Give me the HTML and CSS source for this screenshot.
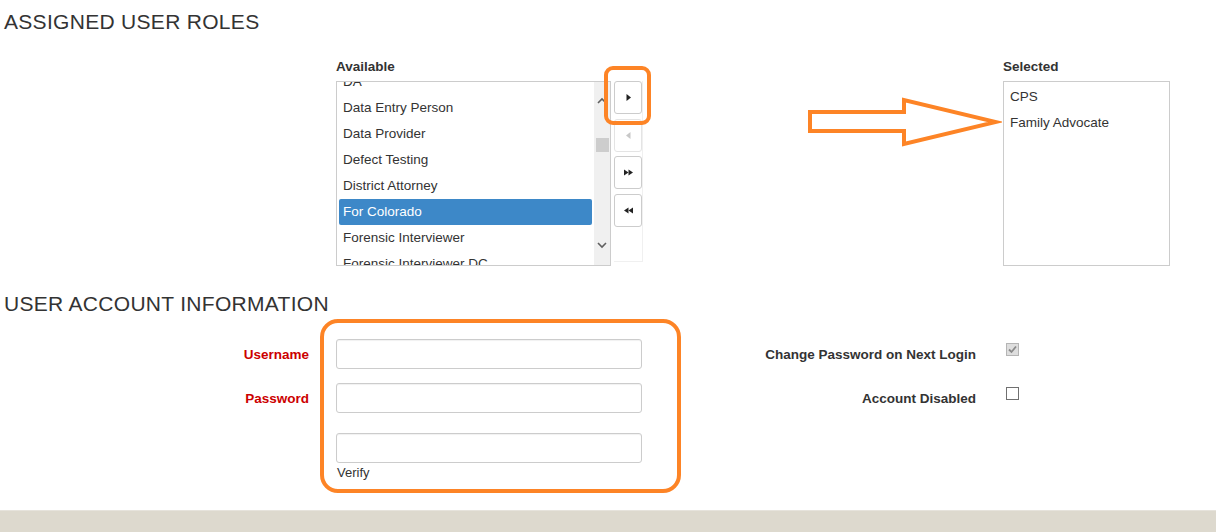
FILE: index.html
```html
<!DOCTYPE html>
<html>
<head>
<meta charset="utf-8">
<link rel="stylesheet" href="styles.css">
</head>
<body>
<div class="page">
  <h2 class="section-title">ASSIGNED USER ROLES</h2>
  <div class="roles">
    <div class="col-available">
      <div class="label">Available</div>
      <div class="listbox">
        <div class="list-items">
          <div class="list-inner">
            <div class="item">DA</div>
            <div class="item">Data Entry Person</div>
            <div class="item">Data Provider</div>
            <div class="item">Defect Testing</div>
            <div class="item">District Attorney</div>
            <div class="item item-active">For Colorado</div>
            <div class="item">Forensic Interviewer</div>
            <div class="item">Forensic Interviewer DC</div>
          </div>
        </div>
        <div class="scrollbar">
          <svg class="sb-up" width="10" height="7" viewBox="0 0 10 7"><polyline points="1,6 5,2 9,6" fill="none" stroke="#606060" stroke-width="1.6"/></svg>
          <div class="sb-thumb"></div>
          <svg class="sb-down" width="10" height="7" viewBox="0 0 10 7"><polyline points="1,1 5,5 9,1" fill="none" stroke="#606060" stroke-width="1.6"/></svg>
        </div>
      </div>
    </div>
    <div class="col-buttons">
      <div class="btn-group">
        <div class="btn"><svg width="7" height="9" viewBox="0 0 7 9"><polygon points="1.5,1 6,4.5 1.5,8" fill="#222"/></svg></div>
        <div class="btn btn-disabled"><svg width="7" height="9" viewBox="0 0 7 9"><polygon points="5.5,1 1,4.5 5.5,8" fill="#c8c8c8"/></svg></div>
        <div class="btn"><svg width="11" height="9" viewBox="0 0 11 9"><polygon points="1,1.5 5.5,4.5 1,7.5" fill="#222"/><polygon points="5.5,1.5 10,4.5 5.5,7.5" fill="#222"/></svg></div>
        <div class="btn"><svg width="11" height="9" viewBox="0 0 11 9"><polygon points="5.5,1.5 1,4.5 5.5,7.5" fill="#222"/><polygon points="10,1.5 5.5,4.5 10,7.5" fill="#222"/></svg></div>
      </div>
    </div>
    <div class="col-selected">
      <div class="label">Selected</div>
      <div class="listbox listbox-selected">
        <div class="list-items">
          <div class="item">CPS</div>
          <div class="item">Family Advocate</div>
        </div>
      </div>
    </div>
  </div>

  <h2 class="section-title section-title-account">USER ACCOUNT INFORMATION</h2>
  <div class="account">
    <div class="acct-row">
      <div class="acct-label">Username</div>
      <div class="input"></div>
      <div class="opt-label">Change Password on Next Login</div>
      <div class="checkbox checkbox-checked">
        <svg width="11" height="11" viewBox="0 0 11 11"><polyline points="2,5.5 4.5,8 9,2.5" fill="none" stroke="#8a8a8a" stroke-width="1.8"/></svg>
      </div>
    </div>
    <div class="acct-row acct-row-2">
      <div class="acct-label">Password</div>
      <div class="input"></div>
      <div class="opt-label">Account Disabled</div>
      <div class="checkbox"></div>
    </div>
    <div class="acct-row acct-row-3">
      <div class="acct-label"></div>
      <div class="input"></div>
    </div>
    <div class="verify">Verify</div>
  </div>

  <div class="footer"></div>
</div>

<div class="callout callout-btn"></div>
<div class="callout callout-form"></div>
<svg class="callout-arrow" width="196" height="52" viewBox="0 0 196 52">
  <polygon points="4,16 98,16 98,4 190,26 98,48 98,35 4,35" fill="none" stroke="#fd8426" stroke-width="4" stroke-linejoin="miter" stroke-miterlimit="6"/>
</svg>
</body>
</html>
```

FILE: styles.css
```css
html, body {
  margin: 0;
  padding: 0;
}
body {
  font-family: "Liberation Sans", Arial, sans-serif;
  color: #333;
  background: #fff;
  position: relative;
  width: 1216px;
  height: 532px;
  overflow: hidden;
}
.page {
  display: flex;
  flex-direction: column;
  height: 532px;
}
.section-title {
  margin: 0;
  padding: 10px 0 0 4px;
  font-size: 21px;
  line-height: 24px;
  font-weight: normal;
  letter-spacing: 0.3px;
  color: #333;
}
.roles {
  display: flex;
  align-items: flex-start;
  margin-top: 25px;
  padding-left: 336px;
}
.label {
  font-weight: bold;
  font-size: 13.5px;
  line-height: 16px;
  margin-bottom: 6px;
  color: #333;
}
.col-available {
  width: 275px;
}
.listbox {
  box-sizing: border-box;
  height: 185px;
  border: 1px solid #ccc;
  display: flex;
  background: #fff;
}
.list-items {
  flex: 1;
  overflow: hidden;
}
.list-inner {
  margin-top: -13px;
}
.item {
  height: 26px;
  line-height: 26px;
  font-size: 13.5px;
  padding: 0 4px;
  margin: 0 2px;
  border-radius: 2px;
  white-space: nowrap;
  color: #333;
}
.item-active {
  background: #3d88c8;
  color: #fff;
}
.scrollbar {
  width: 16px;
  background: #f0f0f0;
  display: flex;
  flex-direction: column;
  align-items: center;
}
.sb-up {
  margin-top: 15px;
}
.sb-thumb {
  width: 13px;
  height: 14px;
  background: #cdcdcd;
  margin-top: 34px;
}
.sb-down {
  margin-top: 90px;
}
.col-buttons {
  margin-left: 3px;
  padding-top: 22px;
}
.btn-group {
  box-sizing: border-box;
  width: 29px;
  height: 181px;
  border-right: 1px solid #f0f0f0;
  border-bottom: 1px solid #f0f0f0;
  display: flex;
  flex-direction: column;
  gap: 4.5px;
}
.btn {
  box-sizing: border-box;
  width: 28px;
  height: 33px;
  border: 1px solid #ccc;
  border-radius: 3px;
  background: #fff;
  display: flex;
  align-items: center;
  justify-content: center;
}
.btn-disabled {
  border-color: #e4e4e4;
}
.col-selected {
  margin-left: 360px;
  width: 167px;
}
.listbox-selected .list-items {
  padding-top: 2px;
}
.section-title-account {
  margin-top: 26px;
  padding-top: 0;
}
.account {
  margin-top: 23px;
}
.acct-row {
  display: flex;
  align-items: center;
  height: 30px;
}
.acct-row-2 {
  margin-top: 14px;
}
.acct-row-3 {
  margin-top: 20px;
}
.acct-label {
  width: 309px;
  margin-right: 27px;
  text-align: right;
  font-weight: bold;
  font-size: 13.5px;
  color: #cc0000;
}
.input {
  box-sizing: border-box;
  width: 306px;
  height: 30px;
  border: 1px solid #ccc;
  border-radius: 3px;
  background: #fff;
  box-shadow: inset 0 1px 1px rgba(0, 0, 0, 0.06);
}
.opt-label {
  width: 334px;
  text-align: right;
  font-weight: bold;
  font-size: 13.5px;
  color: #333;
}
.checkbox {
  box-sizing: border-box;
  width: 13px;
  height: 13px;
  margin-left: 30px;
  align-self: flex-start;
  margin-top: 4px;
  border: 1px solid #707070;
  background: #fff;
  display: flex;
  align-items: center;
  justify-content: center;
}
.checkbox-checked {
  border-color: #b5b5b5;
  background: #dedede;
}
.verify {
  margin-top: 2px;
  padding-left: 337px;
  font-size: 13px;
  line-height: 16px;
  color: #333;
}
.footer {
  margin-top: auto;
  height: 22px;
  box-sizing: border-box;
  background: #ddd9ce;
  border-top: 1px solid #e6e3dc;
}
.callout {
  position: absolute;
  box-sizing: border-box;
  border: 4px solid #fd8426;
}
.callout-btn {
  left: 604px;
  top: 66px;
  width: 47px;
  height: 59px;
  border-radius: 9px;
}
.callout-form {
  left: 320px;
  top: 319px;
  width: 361px;
  height: 174px;
  border-radius: 18px;
}
.callout-arrow {
  position: absolute;
  left: 806px;
  top: 96px;
}
```
